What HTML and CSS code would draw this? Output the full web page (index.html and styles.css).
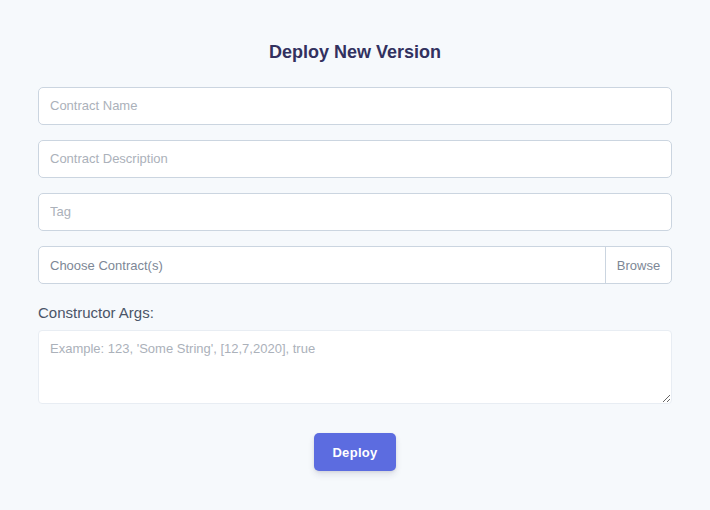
FILE: index.html
```html
<!DOCTYPE html>
<html>
<head>
<meta charset="utf-8">
<link rel="stylesheet" href="styles.css">
</head>
<body>
<main class="page">
  <h1 class="title">Deploy New Version</h1>
  <form class="form">
    <input class="field" type="text" placeholder="Contract Name">
    <input class="field" type="text" placeholder="Contract Description">
    <input class="field" type="text" placeholder="Tag">
    <div class="file">
      <span class="file-label">Choose Contract(s)</span>
      <span class="file-btn">Browse</span>
    </div>
    <label class="label">Constructor Args:</label>
    <textarea class="area" placeholder="Example: 123, 'Some String', [12,7,2020], true"></textarea>
    <div class="actions">
      <button class="deploy" type="button">Deploy</button>
    </div>
  </form>
</main>
</body>
</html>
```
FILE: styles.css
```css
* { box-sizing: border-box; }
html, body { margin: 0; padding: 0; }
body {
  background: #f6f9fc;
  font-family: "Liberation Sans", Arial, sans-serif;
  width: 710px;
  height: 510px;
}
.page {
  padding: 40px 38px 0;
}
.title {
  margin: 0 0 23px;
  text-align: center;
  font-size: 18px;
  font-weight: 700;
  color: #32315f;
  line-height: 24px;
}
.form {
  display: flex;
  flex-direction: column;
}
.field, .file {
  height: 38px;
  border: 1px solid #cbd5e0;
  border-radius: 5px;
  background: #fff;
  margin-bottom: 15px;
  font-family: inherit;
  font-size: 13px;
  color: #4a5568;
}
.field {
  padding: 0 11px 1px;
  outline: none;
}
.field::placeholder, .area::placeholder { color: #abb1ba; }
.file {
  display: flex;
  align-items: center;
}
.file-label {
  flex: 1;
  padding-left: 11px;
  color: #7d8796;
}
.file-btn {
  height: 100%;
  width: 66px;
  border-left: 1px solid #cbd5e0;
  display: flex;
  align-items: center;
  justify-content: center;
  color: #7d8796;
}
.label {
  font-size: 15px;
  color: #4a5568;
  margin-top: 4px;
  line-height: 20px;
  margin-bottom: 7px;
}
.area {
  height: 74px;
  border: 1px solid #e8edf3;
  border-radius: 4px;
  background: #fff;
  padding: 10px 11px;
  font-family: inherit;
  font-size: 13px;
  resize: vertical;
  outline: none;
}
.actions {
  display: flex;
  justify-content: center;
  margin-top: 29px;
}
.deploy {
  width: 82px;
  height: 38px;
  border: none;
  border-radius: 5px;
  background: #5c6ce0;
  color: #fff;
  font-family: inherit;
  font-size: 13px;
  font-weight: 700;
  letter-spacing: 0.3px;
  box-shadow: 0 4px 6px rgba(50, 50, 93, 0.11), 0 1px 3px rgba(0, 0, 0, 0.08);
}
```
